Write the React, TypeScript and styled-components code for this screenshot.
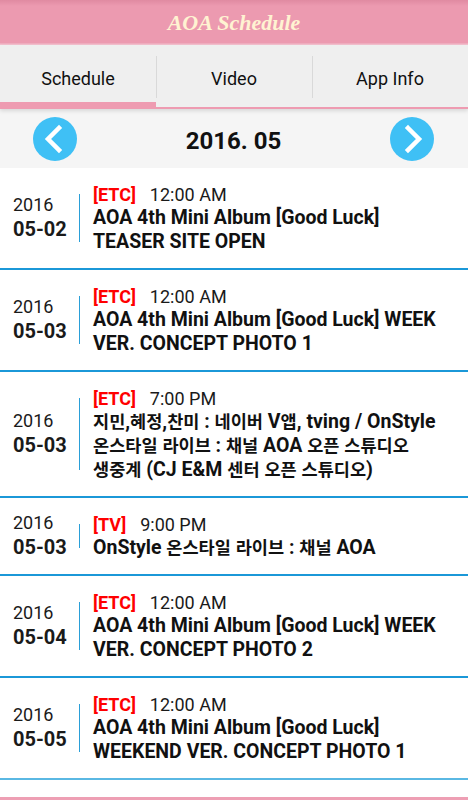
import styled, { createGlobalStyle } from "styled-components";

interface ScheduleItem {
    year: string;
    date: string;
    category: string;
    time: string;
    title: string;
}

const schedules: ScheduleItem[] = [
    { year: "2016", date: "05-02", category: "ETC", time: "12:00 AM", title: "AOA 4th Mini Album [Good Luck] TEASER SITE OPEN" },
    { year: "2016", date: "05-03", category: "ETC", time: "12:00 AM", title: "AOA 4th Mini Album [Good Luck] WEEK VER. CONCEPT PHOTO 1" },
    {
        year: "2016",
        date: "05-03",
        category: "ETC",
        time: "7:00 PM",
        title: "지민,혜정,찬미 : 네이버 V앱, tving / OnStyle 온스타일 라이브 : 채널 AOA 오픈 스튜디오 생중계 (CJ E&M 센터 오픈 스튜디오)",
    },
    { year: "2016", date: "05-03", category: "TV", time: "9:00 PM", title: "OnStyle 온스타일 라이브 : 채널 AOA" },
    { year: "2016", date: "05-04", category: "ETC", time: "12:00 AM", title: "AOA 4th Mini Album [Good Luck] WEEK VER. CONCEPT PHOTO 2" },
    { year: "2016", date: "05-05", category: "ETC", time: "12:00 AM", title: "AOA 4th Mini Album [Good Luck] WEEKEND VER. CONCEPT PHOTO 1" },
];

const tabs = ["Schedule", "Video", "App Info"];

// 한글은 조금 작게 (CJK 폰트 글자폭 맞춤)
function renderTitle(title: string) {
    return title.split(/([\uAC00-\uD7A3]+)/).map((part, idx) =>
        /[\uAC00-\uD7A3]/.test(part) ? <Hangul key={idx}>{part}</Hangul> : part
    );
}

export default function App(): JSX.Element {
    return (
        <>
            <GlobalStyle />
            <Screen>
                <Header>AOA Schedule</Header>
                <TabBar>
                    {tabs.map((tab, idx) => (
                        <Tab key={tab} $active={idx === 0} $first={idx === 0}>
                            {tab}
                        </Tab>
                    ))}
                </TabBar>
                <MonthNav>
                    <ArrowButton aria-label="previous month">
                        <svg width="44" height="44" viewBox="0 0 44 44">
                            <circle cx="22" cy="22" r="22" fill="#3fc0f5" />
                            <path d="M26 11 L15 22 L26 33" fill="none" stroke="#fff" strokeWidth="4.5" strokeLinecap="square" />
                        </svg>
                    </ArrowButton>
                    <Month>2016. 05</Month>
                    <ArrowButton aria-label="next month">
                        <svg width="44" height="44" viewBox="0 0 44 44">
                            <circle cx="22" cy="22" r="22" fill="#3fc0f5" />
                            <path d="M18 11 L29 22 L18 33" fill="none" stroke="#fff" strokeWidth="4.5" strokeLinecap="square" />
                        </svg>
                    </ArrowButton>
                </MonthNav>
                <List>
                    {schedules.map((item, idx) => (
                        <Row key={`schedule ${idx}`} $last={idx === schedules.length - 1}>
                            <DateBox>
                                <Year>{item.year}</Year>
                                <Day>{item.date}</Day>
                            </DateBox>
                            <Divider />
                            <Content>
                                <Meta>
                                    <Category>[{item.category}]</Category>
                                    <Time>{item.time}</Time>
                                </Meta>
                                <Title>{renderTitle(item.title)}</Title>
                            </Content>
                        </Row>
                    ))}
                </List>
                <BottomBar />
            </Screen>
        </>
    );
}

const GlobalStyle = createGlobalStyle`
    * {
        box-sizing: border-box;
    }
    body {
        margin: 0;
        background: #ffffff;
        font-family: Roboto, "Noto Sans CJK KR", sans-serif;
    }
`;

const Screen = styled.div`
    width: 468px;
    height: 800px;
    display: flex;
    flex-direction: column;
    overflow: hidden;
    background: #ffffff;
`;

const Header = styled.div`
    height: 45px;
    flex-shrink: 0;
    display: flex;
    align-items: center;
    justify-content: center;
    background: linear-gradient(#e08aa1 0px, #ec9ab0 6px, #ec9ab0 43px, #f4c0ce 44px);
    color: #fff3d2;
    font-family: "Liberation Serif", serif;
    font-style: italic;
    font-weight: bold;
    font-size: 22px;
    padding-top: 1px;
`;

const TabBar = styled.div`
    height: 64px;
    flex-shrink: 0;
    display: flex;
    background: #efefef;
    position: relative;
    z-index: 1;
    box-shadow: 0 2px 4px rgba(0, 0, 0, 0.12);
`;

const Tab = styled.div<{ $active: boolean; $first: boolean }>`
    flex: 1;
    display: flex;
    align-items: center;
    justify-content: center;
    position: relative;
    padding-top: 9px;
    font-size: 18px;
    color: #111;
    border-bottom: ${(p) => (p.$active ? "7px" : "2px")} solid #ee9bb1;
    padding-bottom: ${(p) => (p.$active ? "0px" : "5px")};

    &::before {
        content: "";
        display: ${(p) => (p.$first ? "none" : "block")};
        position: absolute;
        left: 0;
        top: 11px;
        bottom: 9px;
        width: 1px;
        background: #d9d9d9;
    }
`;

const MonthNav = styled.div`
    height: 59px;
    flex-shrink: 0;
    display: flex;
    align-items: center;
    justify-content: space-between;
    padding: 0 34px 0 33px;
    background: #f5f5f5;
`;

const ArrowButton = styled.div`
    width: 44px;
    height: 44px;
    display: flex;
    margin-top: 1px;
`;

const Month = styled.div`
    font-size: 24px;
    font-weight: bold;
    color: #111;
    margin-top: 4px;
`;

const List = styled.div`
    display: flex;
    flex-direction: column;
    flex: 1;
`;

const Row = styled.div<{ $last: boolean }>`
    display: flex;
    padding: 14px 15px 14px 13px;
    border-bottom: 2px solid ${(p) => (p.$last ? "#5ab8e3" : "#1b98d8")};
`;

const DateBox = styled.div`
    width: 66px;
    flex-shrink: 0;
    display: flex;
    flex-direction: column;
    justify-content: center;
    color: #1a1a1a;
`;

const Year = styled.div`
    font-size: 18px;
    line-height: 22px;
`;

const Day = styled.div`
    font-size: 20px;
    font-weight: bold;
    line-height: 26px;
`;

const Divider = styled.div`
    width: 1px;
    margin: 12px 13px 12px 0;
    background: #2a9fd8;
    flex-shrink: 0;
`;

const Content = styled.div`
    flex: 1;
    display: flex;
    flex-direction: column;
`;

const Meta = styled.div`
    display: flex;
    align-items: center;
    gap: 14px;
    height: 24px;
`;

const Category = styled.span`
    color: #ff0000;
    font-weight: bold;
    font-size: 18px;
`;

const Time = styled.span`
    color: #1a1a1a;
    font-size: 18px;
`;

const Title = styled.div`
    font-size: 19.5px;
    font-weight: bold;
    line-height: 24px;
    color: #111;
    word-break: keep-all;
`;

const Hangul = styled.span`
    font-size: 0.9em;
    line-height: 1;
`;

const BottomBar = styled.div`
    height: 3px;
    flex-shrink: 0;
    background: #ee9fb4;
`;
